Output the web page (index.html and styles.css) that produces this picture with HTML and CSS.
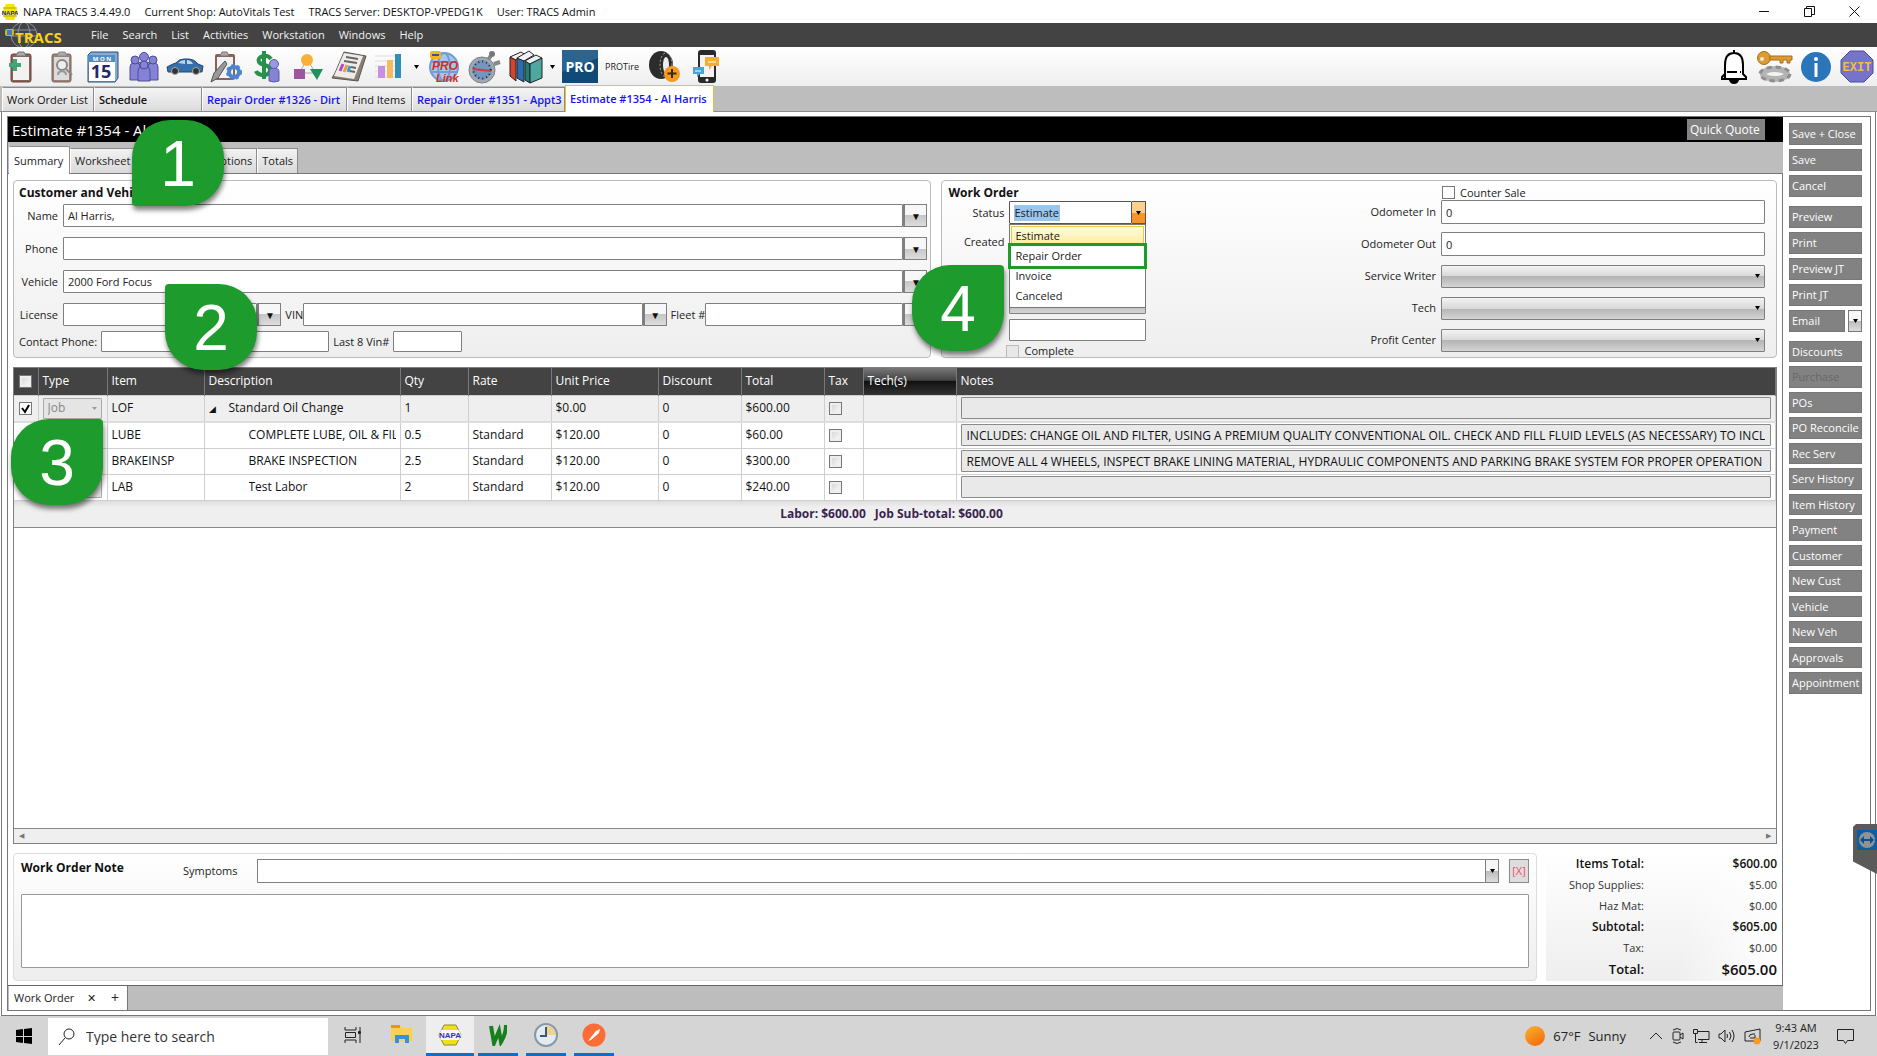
FILE: index.html
```html
<!DOCTYPE html>
<html lang="en">
<head>
<meta charset="utf-8">
<title>NAPA TRACS 3.4.49.0</title>
<link rel="stylesheet" href="styles.css">
</head>
<body>
<header class="titlebar">
  <svg class="app-logo" viewBox="0 0 16 16"><path d="M4 0h8l4 8-4 8H4L0 8z" fill="#f2e60a"/><path d="M1 4h14M1 12h14" stroke="#b9a800"/><text x="8" y="10.500" font-size="6" font-weight="700" fill="#22209c" text-anchor="middle" font-family="Liberation Sans, sans-serif">NAPA</text></svg>
  <span class="tb-version">NAPA TRACS 3.4.49.0</span>
  <span class="tb-shop">Current Shop: AutoVitals Test</span>
  <span class="tb-server">TRACS Server: DESKTOP-VPEDG1K</span>
  <span>User: TRACS Admin</span>
  <div class="window-buttons">
    <button aria-label="Minimize"><svg width="11" height="11" viewBox="0 0 11 11"><path d="M0 5.500h10" stroke="#111"/></svg></button>
    <button aria-label="Restore"><svg width="11" height="11" viewBox="0 0 11 11" fill="none" stroke="#111"><path d="M.5 2.500h7v8h-7zM2.500 2.500v-2h8v8h-3"/></svg></button>
    <button aria-label="Close"><svg width="11" height="11" viewBox="0 0 11 11"><path d="M.5.5l10 10M10.500.5l-10 10" stroke="#111"/></svg></button>
  </div>
</header>

<nav class="menubar">
  <svg class="tracs-logo" width="60" height="24" viewBox="0 0 60 24">
    <g fill="none" stroke="#8793a8"><circle cx="19" cy="12" r="13"/><ellipse cx="19" cy="12" rx="6" ry="13"/><path d="M7 7h24M6 13h26"/></g>
    <rect x="0" y="6" width="9" height="7" rx="2" fill="#f5a623"/><rect x="2" y="7" width="5" height="5" fill="#3b7fc4"/>
    <text x="10" y="20" font-size="15" font-weight="700" fill="#f8d21c" font-family="Open Sans, sans-serif">TRACS</text>
  </svg>
  <a href="#">File</a><a href="#">Search</a><a href="#">List</a><a href="#">Activities</a><a href="#">Workstation</a><a href="#">Windows</a><a href="#">Help</a>
</nav>

<div class="toolbar">
  <button aria-label="New work order"><svg width="24" height="32" viewBox="0 0 24 32"><rect x="2" y="3" width="20" height="28" rx="2" fill="#8b6156" stroke="#64463f"/><path d="M4 6h16v23H4z" fill="#f2f2f2"/><path d="M7 5l2-4h6l2 4z" fill="#aaa" stroke="#777"/><path d="M6 8v12M0 14h12" stroke="#3da877" stroke-width="4"/></svg></button>
  <button aria-label="Find work order"><svg width="24" height="32" viewBox="0 0 24 32"><rect x="2" y="3" width="19" height="28" rx="2" fill="#9b8177" stroke="#7a6760"/><path d="M4 6h15v23H4z" fill="#dcdcdc"/><path d="M7 5l2-4h6l2 4z" fill="#aaa" stroke="#888"/><circle cx="12" cy="14" r="5" fill="#eee" stroke="#888" stroke-width="2"/><path d="M16 18l6 6" stroke="#888" stroke-width="2"/><path d="M8 24c0-5 8-5 8 0" fill="none" stroke="#999" stroke-width="2"/></svg></button>
  <button aria-label="Calendar"><svg width="32" height="32" viewBox="0 0 32 32"><path d="M1 4l3-3h27v26l-3 4H1z" fill="#8aa9cc" stroke="#294f7c"/><path d="M1 4h27v7H1z" fill="#4c8fc9"/><path d="M2 11h26v19H2z" fill="#fff"/><text x="15" y="10" font-size="6" font-weight="700" fill="#fff" text-anchor="middle" font-family="Open Sans, sans-serif">M O N</text><text x="14" y="27" font-size="18" font-weight="700" fill="#232a66" text-anchor="middle" font-family="Open Sans, sans-serif">15</text></svg></button>
  <button aria-label="Customers"><svg width="30" height="30" viewBox="0 0 30 30" fill="#8583d6" stroke="#4e4c97"><path d="M9 16v-3q0-3 3-3h6q3 0 3 3v3z"/><circle cx="15" cy="5" r="4.500"/><path d="M1 28V15q0-4 4-4h3q3 0 3 4v13zM19 28V15q0-4 4-4h2q4 0 4 4v13z"/><circle cx="6" cy="8" r="4"/><circle cx="24" cy="8" r="4"/><path d="M9 29V19q0-4 4-4h4q4 0 4 4v10z"/><circle cx="15" cy="13" r="4"/></svg></button>
  <button aria-label="Vehicles"><svg width="38" height="18" viewBox="0 0 38 18"><path d="M1 9q5-3 9-4 3-4 8-4h5q5 0 9 5l5 2-1 6H2z" fill="#3570ad" stroke="#1e477a"/><path d="M12 5q3-3 7-3v4zM21 2q4 0 6 4h-6z" fill="#bdd4e8"/><circle cx="9" cy="13" r="3.500" fill="#333" stroke="#aaa"/><circle cx="30" cy="13" r="3.500" fill="#333" stroke="#aaa"/></svg></button>
  <button aria-label="Inspection settings"><svg width="32" height="32" viewBox="0 0 32 32"><rect x="5" y="3" width="20" height="26" rx="2" fill="#8b6156"/><path d="M7 6h16v21H7z" fill="#f2f2f2"/><path d="M10 5l2-4h5l2 4z" fill="#aaa" stroke="#777"/><path d="M1 31l3-9L15 10l2 3-9 14z" fill="#999" stroke="#555"/><circle cx="24" cy="21" r="5" fill="none" stroke="#4b84cf" stroke-width="4"/><circle cx="24" cy="21" r="7" fill="none" stroke="#4b84cf" stroke-width="2" stroke-dasharray="3 3"/></svg></button>
  <button aria-label="Payments"><svg width="26" height="32" viewBox="0 0 26 32"><path d="M17 8q-3-4-8-3-6 2-4 6 1 2 6 3 6 2 5 6-2 5-8 4-5-1-6-4M10 0v28" fill="none" stroke="#26914b" stroke-width="4"/><path d="M15 30V21q0-4 5-4t5 4v9q-5 2-10 0z" fill="#8583d6" stroke="#5c5aa5"/><circle cx="20" cy="13" r="4.500" fill="#9a98e4" stroke="#5c5aa5"/></svg></button>
  <button aria-label="Workflow"><svg width="30" height="28" viewBox="0 0 30 28"><path d="M14 7L6 20h17z" fill="none" stroke="#aaa"/><circle cx="14" cy="7" r="6" fill="#f7b137"/><path d="M1 16h11v10H1z" fill="#9d559f"/><path d="M17 16h13l-6 11z" fill="#20915a"/></svg></button>
  <button aria-label="News"><svg width="36" height="32" viewBox="0 0 36 32"><path d="M13 1l22 4-8 25L1 27l3-5z" fill="#8a7f75" stroke="#5c544d"/><path d="M13 2l19 3-9 23-20-3z" fill="#efece8"/><path d="M15 6l12 2M13 10l13 2M20 16l5 1M19 20l5 1" stroke="#666" stroke-width="2"/><path d="M9 20l3-7" stroke="#b048c0" stroke-width="3"/><path d="M13 21l3-7" stroke="#f19b38" stroke-width="3"/><path d="M17 21l2-6" stroke="#3a9ac8" stroke-width="3"/></svg></button>
  <button aria-label="Reports"><svg width="30" height="28" viewBox="0 0 30 28"><path d="M0 3h26M0 8h26M0 13h26M0 18h26M0 24h26" stroke="#ddd"/><path d="M3 13h7v12H3z" fill="#c98fe0"/><path d="M12 7h6v18h-6z" fill="#f5bb5c"/><path d="M20 1h6v24h-6z" fill="#2f8fb5"/></svg></button>
  <button class="tool-more" aria-label="More reports"><svg width="5" height="4" viewBox="0 0 5 4"><path d="M0 0h5L2.500 4z"/></svg></button>
  <button aria-label="PROLink"><svg width="32" height="34" viewBox="0 0 32 34"><circle cx="16" cy="17" r="14" fill="#a7c6ec"/><g fill="none" stroke="#6f9dd6" stroke-width="2"><circle cx="16" cy="17" r="14"/><ellipse cx="16" cy="17" rx="6" ry="14"/><path d="M3 12h26M3 22h26"/></g><rect x="2" y="1" width="11" height="8" rx="2" fill="#f4b223"/><path d="M4 4h7v2H4z" fill="#2c56a0"/><g fill="#c9341c" font-weight="700" font-style="italic" font-family="Liberation Sans, sans-serif"><text x="4" y="20" font-size="12">PRO</text><text x="8" y="32" font-size="11">Link</text></g></svg></button>
  <button aria-label="Labor timer"><svg width="34" height="34" viewBox="0 0 34 34"><path d="M20 10l4-6M26 14l6-2" stroke="#888" stroke-width="4"/><circle cx="24" cy="4" r="3" fill="#777"/><circle cx="14" cy="20" r="13" fill="#a2a8ae" stroke="#7a8086"/><circle cx="14" cy="20" r="10" fill="#7296be"/><circle cx="14" cy="20" r="8.500" fill="none" stroke="#223" stroke-width="2" stroke-dasharray="1 3"/><path d="M5 19l18 2" stroke="#d6393f" stroke-width="2"/></svg></button>
  <button aria-label="Catalogs"><svg width="34" height="34" viewBox="0 0 34 34" stroke="#222"><path d="M1 7l6 3v21l-6-5z" fill="#d2452c"/><path d="M1 7L12 2l5 3-10 5z" fill="#f6f0e8"/><path d="M8 8l7 3v21l-7-4z" fill="#2b6cb3"/><path d="M8 8L20 1l5 4-10 6z" fill="#eef2f6"/><path d="M16 11l5 3v19l-5-3z" fill="#1f7e78"/><path d="M16 11l11-6 6 3-12 6z" fill="#e8f2f0"/><path d="M21 14l12-6v20l-12 5z" fill="#4fa8a0"/></svg></button>
  <button class="tool-more" aria-label="More catalogs"><svg width="5" height="4" viewBox="0 0 5 4"><path d="M0 0h5L2.500 4z"/></svg></button>
  <button aria-label="PRO"><svg width="36" height="33" viewBox="0 0 36 33"><path d="M0 0h36v33H0z" fill="#114a76"/><path d="M0 0h36v8L0 22z" fill="#2b658f"/><text x="18" y="22" font-size="14" font-weight="700" fill="#fff" text-anchor="middle" font-family="Open Sans, sans-serif">PRO</text></svg></button>
  <button class="tool-text">PROTire</button>
  <button aria-label="Tires"><svg width="32" height="32" viewBox="0 0 32 32"><ellipse cx="12" cy="14" rx="12" ry="14" fill="#2c2c2c"/><ellipse cx="17" cy="14" rx="6" ry="12" fill="none" stroke="#aaa" stroke-dasharray="2 2"/><ellipse cx="17" cy="14" rx="3" ry="8" fill="#eee"/><circle cx="23" cy="23" r="8" fill="#f79a1e"/><path d="M23 18v9M18.500 22.500h9" stroke="#3b2a10" stroke-width="2"/></svg></button>
  <button aria-label="Text messages"><svg width="28" height="34" viewBox="0 0 28 34"><rect x="6" y="0" width="18" height="33" rx="3" fill="#2a2a2a"/><path d="M8 5h14v22H8z" fill="#f4f4f4"/><circle cx="15" cy="30" r="1.500" fill="#fff"/><path d="M13 7h14v9h-7l-3 4v-4h-4z" fill="#f7ae30"/><path d="M1 17h11v7H8l-3 3v-3H1z" fill="#45a5de"/><path d="M16 12h8M3 21h6" stroke="#fff"/></svg></button>
  <div class="tool-right">
    <button aria-label="Notifications"><svg width="28" height="36" viewBox="0 0 28 36"><path d="M5 29V16q0-12 9-12t9 12v9l3 3v2H2v-2l3-3zM14 1v3M7 23h10M20 23h1" fill="#fff" stroke="#000" stroke-width="2"/><path d="M9 31q1 4 5 4t5-4z" fill="#000"/></svg></button>
    <button aria-label="Security"><svg width="36" height="32" viewBox="0 0 36 32"><ellipse cx="18" cy="23" rx="12" ry="5" fill="none" stroke="#b4b4b4" stroke-width="6"/><ellipse cx="18" cy="23" rx="15" ry="7" fill="none" stroke="#8d8d8d" stroke-width="3" stroke-dasharray="5 4"/><circle cx="7" cy="7" r="6.500" fill="#dd9b33" stroke="#a86e18"/><circle cx="5" cy="8" r="2" fill="#f7e9cf"/><path d="M13 5h22v4h-2v3h-3V9h-4v3h-3V9H13z" fill="#dd9b33" stroke="#a86e18"/></svg></button>
    <button aria-label="Information"><svg width="30" height="30" viewBox="0 0 30 30"><circle cx="15" cy="15" r="15" fill="#2b75bb"/><circle cx="15" cy="7" r="2" fill="#fff"/><path d="M15 11v14" stroke="#fff" stroke-width="3"/></svg></button>
    <button aria-label="Exit"><svg width="34" height="33" viewBox="0 0 34 33"><path d="M10 1h14l9 9v13l-9 9H10l-9-9V10z" fill="#7674c8" stroke="#4c4aa0"/><text x="17" y="21" font-size="12" font-weight="700" fill="#f5b94c" text-anchor="middle" font-family="Liberation Mono, monospace">EXIT</text></svg></button>
  </div>
</div>

<nav class="doc-tabs">
  <button class="w-list">Work Order List</button>
  <button class="w-sched strong">Schedule</button>
  <button class="w-order blue">Repair Order #1326 - Dirt</button>
  <button class="w-find">Find Items</button>
  <button class="w-appt blue">Repair Order #1351 - Appt3</button>
  <button class="w-est blue current">Estimate #1354 - Al Harris</button>
</nav>

<main class="frame">
<div class="frame-inner">
  <div class="editor">
    <div class="doc-title"><h1>Estimate #1354 - Al Harris,</h1><button>Quick Quote</button></div>
    <nav class="page-tabs">
      <button class="w-summary current">Summary</button>
      <button>Worksheet</button>
      <button class="w-options">Options</button>
      <button>Totals</button>
    </nav>
    <div class="page">
      <div class="panels">
        <section class="panel customer">
          <h2>Customer and Vehicle</h2>
          <div class="crow"><label for="name">Name</label><input id="name" value="Al Harris,"><button class="drop" aria-label="Names">▼</button></div>
          <div class="crow"><label for="phone">Phone</label><input id="phone"><button class="drop" aria-label="Phones">▼</button></div>
          <div class="crow"><label for="vehicle">Vehicle</label><input id="vehicle" value="2000 Ford Focus"><button class="drop" aria-label="Vehicles">▼</button></div>
          <div class="crow">
            <label for="license">License</label><input id="license" class="w-license"><button class="drop" aria-label="Licenses">▼</button>
            <label for="vin" class="tight">VIN</label><input id="vin" class="w-vin"><button class="drop" aria-label="VINs">▼</button>
            <label for="fleet" class="tight">Fleet #</label><input id="fleet" class="w-fleet"><button class="drop" aria-label="Fleets">▼</button>
          </div>
          <div class="contact"><label for="cphone">Contact Phone:</label><input id="cphone" class="w-cphone"><label for="last8">Last 8 Vin#</label><input id="last8" class="w-last8"></div>
        </section>
        <section class="panel order">
          <h2>Work Order</h2>
          <div class="order-left">
            <label for="status">Status</label>
            <div class="status-box"><input id="status" value="Estimate"><button aria-label="Status list"><svg width="5" height="4" viewBox="0 0 5 4"><path d="M0 0h5L2.500 4z"/></svg></button>
              <ul class="status-list"><li class="hot">Estimate</li><li class="boxed">Repair Order</li><li>Invoice</li><li>Canceled</li></ul>
            </div>
            <label for="created">Created</label><input id="created">
            <select class="date" aria-label="Promised"><option>9/1/2023 10:00</option></select>
            <input class="po" aria-label="PO number">
            <div class="check complete"><input type="checkbox" id="complete" disabled><label for="complete">Complete</label></div>
          </div>
          <div class="order-right">
            <div class="check counter"><input type="checkbox" id="counter"><label for="counter">Counter Sale</label></div>
            <label for="odoin">Odometer In</label><input id="odoin" value="0">
            <label for="odoout">Odometer Out</label><input id="odoout" value="0">
            <label for="writer">Service Writer</label><select id="writer"><option></option></select>
            <label for="tech">Tech</label><select id="tech"><option></option></select>
            <label for="profit">Profit Center</label><select id="profit"><option></option></select>
          </div>
        </section>
      </div>

      <div class="grid">
        <table>
          <colgroup><col class="c-check"><col class="c-type"><col class="c-item"><col class="c-desc"><col class="c-qty"><col class="c-rate"><col class="c-unit"><col class="c-disc"><col class="c-total"><col class="c-tax"><col class="c-techs"><col></colgroup>
          <thead><tr><th><input type="checkbox" aria-label="All items"></th><th>Type</th><th>Item</th><th>Description</th><th>Qty</th><th>Rate</th><th>Unit Price</th><th>Discount</th><th>Total</th><th>Tax</th><th class="sorted">Tech(s)</th><th>Notes</th></tr></thead>
          <tbody>
            <tr class="job"><td><input type="checkbox" checked aria-label="Select LOF"></td><td class="type"><select disabled aria-label="Type"><option>Job</option></select></td><td>LOF</td><td><span class="twist">◢</span>Standard Oil Change</td><td>1</td><td></td><td>$0.00</td><td>0</td><td>$600.00</td><td><input type="checkbox" aria-label="Taxed"></td><td></td><td class="note"><input readonly aria-label="Notes"></td></tr>
            <tr><td></td><td class="type"><select disabled aria-label="Type"><option>Labor</option></select></td><td>LUBE</td><td class="sub"><div>COMPLETE LUBE, OIL &amp; FILTER</div></td><td>0.5</td><td>Standard</td><td>$120.00</td><td>0</td><td>$60.00</td><td><input type="checkbox" aria-label="Taxed"></td><td></td><td class="note"><input readonly aria-label="Notes" value="INCLUDES: CHANGE OIL AND FILTER, USING A PREMIUM QUALITY CONVENTIONAL OIL. CHECK AND FILL FLUID LEVELS (AS NECESSARY) TO INCLUDE"></td></tr>
            <tr><td></td><td class="type"><select disabled aria-label="Type"><option>Labor</option></select></td><td>BRAKEINSP</td><td class="sub"><div>BRAKE INSPECTION</div></td><td>2.5</td><td>Standard</td><td>$120.00</td><td>0</td><td>$300.00</td><td><input type="checkbox" aria-label="Taxed"></td><td></td><td class="note"><input readonly aria-label="Notes" value="REMOVE ALL 4 WHEELS, INSPECT BRAKE LINING MATERIAL, HYDRAULIC COMPONENTS AND PARKING BRAKE SYSTEM FOR PROPER OPERATION"></td></tr>
            <tr><td></td><td class="type"><select disabled aria-label="Type"><option>Labor</option></select></td><td>LAB</td><td class="sub"><div>Test Labor</div></td><td>2</td><td>Standard</td><td>$120.00</td><td>0</td><td>$240.00</td><td><input type="checkbox" aria-label="Taxed"></td><td></td><td class="note"><input readonly aria-label="Notes"></td></tr>
          </tbody>
        </table>
        <div class="grid-sum"><span>Labor: $600.00</span><span>Job Sub-total: $600.00</span></div>
        <div class="hscroll"><span>◀</span><span>▶</span></div>
      </div>

      <div class="bottom">
        <section class="panel notes">
          <div class="notes-top"><h2><label for="wonote">Work Order Note</label></h2><label for="symptoms">Symptoms</label><div class="symptom-box"><input id="symptoms"><button aria-label="Symptom list"><svg width="5" height="4" viewBox="0 0 5 4"><path d="M0 0h5L2.500 4z"/></svg></button></div><button class="clear">[X]</button></div>
          <textarea id="wonote"></textarea>
        </section>
        <dl class="totals">
          <dt class="b">Items Total:</dt><dd class="b">$600.00</dd>
          <dt>Shop Supplies:</dt><dd>$5.00</dd>
          <dt>Haz Mat:</dt><dd>$0.00</dd>
          <dt class="b">Subtotal:</dt><dd class="b">$605.00</dd>
          <dt>Tax:</dt><dd>$0.00</dd>
          <dt class="g">Total:</dt><dd class="gg">$605.00</dd>
        </dl>
      </div>
    </div>
    <nav class="foot-tabs"><div class="foot-tab"><span>Work Order</span><button aria-label="Close tab">✕</button><button class="add" aria-label="Add tab">+</button></div></nav>
  </div>

  <aside class="actions">
    <div class="agroup">
      <button>Save + Close</button><button>Save</button><button>Cancel</button>
    </div>
    <div class="agroup">
      <button>Preview</button><button>Print</button><button>Preview JT</button><button>Print JT</button>
      <div class="email"><button>Email</button><button class="email-more" aria-label="Email options"><svg width="5" height="4" viewBox="0 0 5 4"><path d="M0 0h5L2.500 4z"/></svg></button></div>
    </div>
    <div class="agroup dense">
      <button>Discounts</button><button disabled>Purchase</button><button>POs</button><button>PO Reconcile</button><button>Rec Serv</button><button>Serv History</button><button>Item History</button><button>Payment</button><button>Customer</button><button>New Cust</button><button>Vehicle</button><button>New Veh</button><button>Approvals</button><button>Appointment</button>
    </div>
  </aside>
</div>
</main>

<footer class="taskbar">
  <button class="start" aria-label="Start"><svg width="16" height="16" viewBox="0 0 16 16"><path d="M0 2l7-1v7H0zM8 1l8-1v8H8zM0 9h7v6l-7-1zM8 9h8v7l-8-1z"/></svg></button>
  <div class="search"><svg width="18" height="18" viewBox="0 0 18 18" fill="none" stroke="#222"><circle cx="11" cy="6" r="5"/><path d="M7 10l-6 7"/></svg><input aria-label="Search" placeholder="Type here to search"></div>
  <button class="task plain" aria-label="Task view"><svg width="18" height="16" viewBox="0 0 18 16" fill="none" stroke="#222"><path d="M1 0v3h11V0M1.500 5.500h10v5h-10zM1 16v-3h11v3M16 0v4M16 7v9"/><path d="M14.500 4.500h2v2h-2z" fill="#222"/></svg></button>
  <button class="task plain" aria-label="File Explorer"><svg width="22" height="19" viewBox="0 0 22 19"><path d="M0 0h9l2 3h10v13H0z" fill="#f9cf57"/><path d="M0 0h9v3H0z" fill="#dc9a22"/><path d="M4 18v-8h14v8h-4v-4H8v4z" fill="#3b8edb"/></svg></button>
  <button class="task active" aria-label="NAPA TRACS"><svg width="24" height="22" viewBox="0 0 24 22"><path d="M6 1h12l5 10-5 10H6L1 11z" fill="#eee11a" stroke="#8a8a2a"/><path d="M3 6h18l2 5-2 5H3l-2-5z" fill="#f5f5ff"/><text x="12" y="14" font-size="8" font-weight="700" fill="#3a2fa8" text-anchor="middle" font-family="Liberation Sans, sans-serif">NAPA</text></svg></button>
  <button class="task" aria-label="Webroot"><svg width="18" height="22" viewBox="0 0 18 22"><path d="M2 2l3 17 5-12 2 11Q17 10 17 1" fill="none" stroke="#17801c" stroke-width="4"/></svg></button>
  <button class="task" aria-label="Scheduler"><svg width="24" height="24" viewBox="0 0 24 24"><circle cx="12" cy="12" r="11" fill="#e3ebf1" stroke="#8499a8" stroke-width="2"/><path d="M12 12V2q9 1 10 10z" fill="#edd391"/><path d="M12 4v9H6" fill="none" stroke="#3c5870" stroke-width="2"/></svg></button>
  <button class="task" aria-label="Postman"><svg width="24" height="24" viewBox="0 0 24 24"><circle cx="12" cy="12" r="11.500" fill="#fb6c37"/><path d="M6 18l8-10 4-2-1 4-8 7z" fill="#fff"/></svg></button>
  <div class="tray">
    <span class="sun"></span><span class="temp">67°F</span><span class="sky">Sunny</span>
    <svg width="14" height="8" viewBox="0 0 14 8" fill="none" stroke="#222"><path d="M1 7l6-6 6 6"/></svg>
    <svg width="14" height="18" viewBox="0 0 14 18" fill="none" stroke="#222"><rect x="2" y="5" width="7" height="8" rx="1"/><path d="M9 8l3-2v6l-3-2M2 3q4-3 8 0M2 15q4 3 8 0"/></svg>
    <svg width="17" height="15" viewBox="0 0 17 15" fill="none" stroke="#222"><path d="M5 2.500h11v8H5M9 11v3M6 13.500h8M.5.5h4v4h-4zM2.500 5v8.500h2"/></svg>
    <svg width="18" height="14" viewBox="0 0 18 14" fill="none" stroke="#222"><path d="M1 5v4h2l4 4V1L3 5zM9 5q1 2 0 4M11.500 3q3 4 0 8M14 1q4 6 0 12"/></svg>
    <svg width="17" height="17" viewBox="0 0 17 17" fill="none" stroke="#222"><path d="M1 4l15-3v12H1zM5 9q0-3 4-3h2M11 7v3H6"/><circle cx="13" cy="13" r="3.500" fill="#ff9a1f" stroke="none"/></svg>
    <div class="clock"><span>9:43 AM</span><span>9/1/2023</span></div>
    <svg width="17" height="17" viewBox="0 0 17 17" fill="none" stroke="#222"><path d="M.5 1.500h16v11h-6l-2 3-2-3h-6z"/></svg>
  </div>
</footer>

<div class="remote-tab"><svg width="20" height="20" viewBox="0 0 20 20"><path d="M0 0h20v20H0z" fill="#0d5da3"/><circle cx="10" cy="10" r="8" fill="#8f9396"/><path d="M3 10l4-4v3h6V6l4 4-4 4v-3H7v3z" fill="#0d4f8e"/></svg></div>
<div class="step s1">1</div>
<div class="step s2">2</div>
<div class="step s3">3</div>
<div class="step s4">4</div>
</body>
</html>
```

FILE: styles.css
```css
* { box-sizing: border-box; }
body {
  margin: 0;
  min-height: 100vh;
  display: flex;
  flex-direction: column;
  position: relative;
  overflow-x: hidden;
  background: #fff;
  color: #222;
  font: 11px/16px "Open Sans", "Noto Sans", sans-serif;
}
button, input, select, textarea { font: inherit; color: inherit; margin: 0; }
button { padding: 0; border: 0; background: none; display: flex; align-items: center; }
input, select, textarea { border: 1px solid #7f7f7f; border-radius: 1px; background: #fff; padding: 0 4px; min-width: 0; }
h1, h2, ul, dl, dd { margin: 0; padding: 0; }
svg { display: block; flex: none; }

/* Window title */
.titlebar { height: 23px; display: flex; align-items: center; padding-left: 2px; color: #111; }
.app-logo { width: 16px; height: 16px; margin-right: 5px; }
.tb-version, .tb-shop, .tb-server { margin-right: 14px; }
.window-buttons { margin-left: auto; display: flex; }
.window-buttons button { width: 45px; height: 22px; justify-content: center; }

/* Menu */
.menubar { height: 24px; background: #434343; display: flex; align-items: center; padding-left: 5px; overflow: hidden; }
.tracs-logo { margin-right: 19px; }
.menubar a { color: #f2f2f2; text-decoration: none; padding: 0 7px; }

/* Toolbar */
.toolbar { height: 39px; display: flex; background: linear-gradient(#fff, #eee); }
.toolbar button { width: 41px; justify-content: center; }
.toolbar .tool-more { width: 13px; }
.toolbar .tool-text { width: 44px; font-size: 9px; }
.tool-right { margin-left: auto; display: flex; }

/* Document tabs */
.doc-tabs { height: 26px; background: #bdbdbd; display: flex; align-items: flex-end; padding-left: 2px; border-bottom: 1px solid #8c8c8c; }
.doc-tabs button { height: 24px; padding: 0 4px; border: 1px solid #8c8c8c; border-bottom: 0; border-left-color: #fff; background: linear-gradient(#f4f4f4, #dcdcdc); white-space: nowrap; color: #111; }
.doc-tabs .strong, .doc-tabs .blue { font-weight: 600; }
.doc-tabs .blue { color: #1414f0; }
.doc-tabs .current { height: 27px; margin-bottom: -1px; background: #fff; border: 1px solid #f3bd2e; border-bottom: 0; }
.w-list { width: 92px; } .w-sched { width: 108px; } .w-order { width: 145px; }
.w-find { width: 65px; } .w-appt { width: 153px; } .w-est { width: 149px; }

/* Frame */
.frame { flex: 1; display: flex; margin: 0 1px; padding: 4px 4px 4px 5px; border: 1px solid #777; border-top: 0; }
.frame-inner { flex: 1; min-width: 0; display: flex; border: 1px solid #777; }
.editor { flex: 1; min-width: 0; display: flex; flex-direction: column; }
.doc-title { height: 25px; background: #000; color: #fff; display: flex; align-items: center; justify-content: space-between; padding: 0 18px 0 4px; }
.doc-title h1 { font-size: 15px; font-weight: 400; }
.doc-title button { width: 78px; height: 21px; padding-left: 3px; background: #828282; font-size: 12px; }
.page-tabs { height: 32px; background: #bdbdbd; display: flex; align-items: flex-end; padding-left: 1px; border-bottom: 1px solid #777; }
.page-tabs button { height: 25px; padding: 0 4px; border: 1px solid #8c8c8c; border-left-color: #fff; border-bottom: 0; background: linear-gradient(#f2f2f2, #dadada); }
.page-tabs .current { height: 28px; margin-bottom: -1px; background: #fff; border-radius: 2px 2px 0 0; }
.page-tabs .w-summary { width: 61px; }
.page-tabs .w-options { width: 122px; justify-content: flex-end; }
.page { flex: 1; display: flex; flex-direction: column; padding: 6px 5px 4px; border-right: 1px solid #777; }

/* Panels */
.panels { display: grid; grid-template-columns: 919fr 836fr; gap: 10px; }
.panel { border: 1px solid #bbb; border-radius: 4px; background: linear-gradient(#fff, #eee); }
.panel h2 { font-size: 12px; line-height: 16px; font-weight: 700; color: #111; }
.customer { height: 178px; padding: 4px 3px 0 5px; }
.customer h2 { margin-bottom: 3px; }
.crow { display: flex; height: 23px; margin-bottom: 10px; align-items: center; }
.crow input { height: 23px; flex: 1; }
.crow label { width: 44px; padding-right: 5px; text-align: right; white-space: nowrap; }
.crow .tight { width: auto; padding: 0 0 0 4px; }
.crow .drop { width: 24px; height: 23px; }
.drop { justify-content: center; border: 1px solid #7f7f7f; border-left-width: 2px; background: linear-gradient(#f7f7f7 50%, #c6c6c6 50%, #ddd); font-size: 10px; color: #111; }
.crow .w-license { flex: 192; } .crow .w-vin { flex: 343; } .crow .w-fleet { flex: 196; }
.contact { display: flex; align-items: center; height: 21px; margin-top: -5px; gap: 4px; }
.contact input { height: 21px; }
.w-cphone { width: 228px; } .w-last8 { width: 69px; }

.order { height: 178px; padding: 4px 11px 0 6px; display: grid; grid-template-columns: 198px 1fr 428px; grid-template-rows: 16px 1fr; }
.order h2 { grid-column: 1; grid-row: 1; }
.order label { text-align: right; padding-right: 5px; }
.order-left { grid-column: 1; grid-row: 2; display: grid; grid-template-columns: 61px 137px; align-content: start; row-gap: 5px; align-items: center; }
.order-left input, .order-left select { height: 23px; }
.order-left #created { height: 24px; margin: 3px 0 30px; }
.order-left label[for="created"] { align-self: start; margin-top: 5px; }
.order-left .date, .order-left .po { grid-column: 2; }
.order-left .po { height: 22px; }
.status-box { position: relative; display: flex; width: 137px; }
.status-box input { flex: 1; width: 120px; border-color: #555; background: linear-gradient(#99c6ee, #99c6ee) 4px 3px / 46px 16px no-repeat #fff; }
.status-box button { width: 14px; justify-content: center; border: 1px solid #555; border-left: 0; background: linear-gradient(#fcd08b 50%, #fb9325 50%); }
.status-list { position: absolute; left: 0; top: 23px; width: 137px; padding: 1px; border: 1px solid #777; background: #fff; list-style: none; z-index: 2; }
.status-list li { height: 20px; line-height: 20px; padding-left: 4px; }
.status-list .hot { border: 1px solid #e8c84a; background: linear-gradient(#fffbe0, #fdec9c); line-height: 18px; padding-left: 3px; }
.status-list .boxed { outline: 3px solid #1e9b2d; }
.check { display: flex; align-items: center; }
.check label { padding: 0 0 0 5px; }
.complete { grid-column: 2; margin: -3px 0 0 -3px; }
.check input, table input[type="checkbox"] { appearance: none; width: 13px; height: 13px; padding: 0; border: 1px solid #777; border-radius: 0; background: #fff; flex: none; }
.order-left .check input { height: 13px; border-color: #bbb; background: #e8e8e8; }
.order-right { grid-column: 3; grid-row: 1 / 3; display: grid; grid-template-columns: 104px 324px; grid-template-rows: 7px; grid-auto-rows: 24px; row-gap: 8px; align-items: center; align-content: start; }
.order-right .check { grid-column: 2; padding-left: 1px; height: 15px; align-self: start; }
.order-right > input { height: 24px; }
.order-right select { height: 23px; }
select { appearance: none; background: url("data:image/svg+xml,%3Csvg xmlns='http://www.w3.org/2000/svg' width='5' height='4'%3E%3Cpath d='M0 0h5L2.500 4z'/%3E%3C/svg%3E") right 4px center no-repeat, linear-gradient(#f3f3f3, #d8d8d8 50%, #b4b4b4 50%, #d4d4d4); }

/* Items grid */
.grid { flex: 1; display: flex; flex-direction: column; margin-top: 9px; border: 1px solid #808080; }
table { width: 100%; table-layout: fixed; border-collapse: collapse; font-size: 12px; color: #111; }
.c-check { width: 24px; } .c-type { width: 69px; } .c-item { width: 97px; } .c-desc { width: 196px; }
.c-qty { width: 68px; } .c-rate { width: 83px; } .c-unit { width: 107px; } .c-disc { width: 83px; }
.c-total { width: 83px; } .c-tax { width: 39px; } .c-techs { width: 93px; }
th { height: 27px; padding: 0 4px; background: #434343; border-right: 1px solid #777; color: #fff; font-weight: 400; text-align: left; }
th.sorted { background: linear-gradient(#777, #444 45%, #111 50%, #333); }
td { height: 26px; padding: 0 4px; border: 1px solid #cfcfcf; border-left: 0; overflow: hidden; white-space: nowrap; }
.job td { height: 27px; background: #efefef; border-bottom: 2px solid #ddd; }
th:first-child, td:first-child { padding: 0 0 0 5px; }
table input[type="checkbox"] { display: block; background: linear-gradient(135deg, #d0d0d0, #fff); box-shadow: inset 0 0 0 2px #eee; }
table input[type="checkbox"]:checked { background: url("data:image/svg+xml,%3Csvg xmlns='http://www.w3.org/2000/svg' width='11' height='11'%3E%3Cpath d='M2 5l3 4 4-7' fill='none' stroke='%23000' stroke-width='2'/%3E%3C/svg%3E") no-repeat #fff; box-shadow: none; }
.type select { width: 59px; height: 21px; display: block; color: #888; opacity: 1; border-color: #aaa; background: url("data:image/svg+xml,%3Csvg xmlns='http://www.w3.org/2000/svg' width='5' height='3'%3E%3Cpath d='M0 0h5L2.500 3z' fill='%23999'/%3E%3C/svg%3E") right 4px center no-repeat #e5e5e5; }
.sub div { margin-left: 40px; overflow: hidden; }
.twist { display: inline-block; width: 20px; font-size: 9px; }
.note input { display: block; width: 100%; height: 22px; background: #e9e9e9; border-color: #8a8a8a; padding: 0 5px; }
.grid-sum { height: 27px; display: flex; justify-content: center; gap: 9px; align-items: center; padding-right: 7px; background: linear-gradient(#ddd, #efefef 6px); border-bottom: 1px solid #888; color: #3a2450; font-size: 12px; font-weight: 700; }
.hscroll { margin-top: auto; height: 15px; display: flex; justify-content: space-between; align-items: center; padding: 0 5px; border-top: 1px solid #888; background: #efefef; font-size: 7px; color: #777; }

/* Notes and totals */
.bottom { display: flex; gap: 9px; margin-top: 9px; }
.notes { flex: 1; min-width: 0; height: 128px; padding: 5px 7px 12px; display: flex; flex-direction: column; border-color: #ddd; }
.notes-top { display: flex; align-items: center; height: 24px; margin-bottom: 11px; }
.notes-top h2 { width: 162px; margin-bottom: 6px; }
.notes-top > label { width: 74px; }
.symptom-box { flex: 1; display: flex; height: 24px; }
.symptom-box input { flex: 1; border-right: 0; }
.symptom-box button { width: 14px; justify-content: center; border: 1px solid #7f7f7f; background: linear-gradient(#f7f7f7 50%, #bbb 50%, #ddd); }
.clear { width: 20px; height: 24px; margin-left: 10px; justify-content: center; border: 1px solid #8a8a8a; background: #ddd; color: #f0506a; }
.notes textarea { flex: 1; resize: none; border-color: #999; }
.totals { width: 231px; height: 128px; display: grid; grid-template-columns: 98px 1fr; grid-auto-rows: 21px; align-items: center; text-align: right; background: linear-gradient(100deg, transparent 60%, #fff), linear-gradient(#fff, #eee); color: #333; }
.totals .b { font-size: 12px; font-weight: 600; color: #111; }
.totals .g { font-size: 13px; font-weight: 600; color: #111; }
.totals .gg { font-size: 15px; font-weight: 600; color: #111; }
.foot-tabs { height: 25px; background: #bdbdbd; border-top: 1px solid #666; padding-left: 1px; }
.foot-tab { width: 119px; height: 24px; padding: 0 0 0 5px; display: flex; align-items: center; background: #fff; border-right: 1px solid #777; }
.foot-tab span { flex: 1; white-space: nowrap; }
.foot-tab button { width: 24px; justify-content: center; }
.foot-tab .add { font-size: 14px; }

/* Action buttons */
.actions { width: 87px; padding: 6px 8px 0 6px; }
.agroup { display: grid; gap: 4px; margin-bottom: 9px; }
.agroup button { height: 22px; padding-left: 2px; background: #828282; border: 1px solid #777; color: #fff; white-space: nowrap; }
.agroup button:disabled { color: #686868; }
.agroup.dense button:nth-child(odd) { height: 21px; }
.email { display: flex; gap: 3px; }
.email button:first-child { flex: 1; }
.email .email-more { width: 14px; padding: 0; justify-content: center; background: linear-gradient(#f7f7f7 50%, #bbb 50%, #ddd); }

/* Taskbar */
.taskbar { height: 40px; background: #d5d5d5; display: flex; align-items: stretch; }
.start { width: 48px; justify-content: center; }
.search { width: 280px; margin: 2px 0 1px; background: #fff; display: flex; align-items: center; padding-left: 10px; gap: 10px; }
.search input { border: 0; padding: 0; flex: 1; font-size: 14px; }
.search input::placeholder { color: #333; }
.task { width: 40px; margin: 0 4px; justify-content: center; border-bottom: 3px solid #0a6fce; }
.task.plain { border-color: transparent; margin: 0; width: 49px; }
.task.active { background: #eee; width: 48px; margin: 0; }
.tray { margin-left: auto; padding-right: 23px; display: flex; align-items: center; gap: 8px; font-size: 13px; color: #222; }
.sun { width: 20px; height: 20px; border-radius: 50%; background: linear-gradient(150deg, #fdb22b, #f0640c); }
.sky { margin-right: 15px; }
.clock { font-size: 11px; line-height: 17px; text-align: center; width: 48px; margin: 0 9px 0 3px; }
.clock span { display: block; }

/* Overlays */
.remote-tab { position: absolute; right: 0; top: 824px; width: 24px; height: 50px; padding: 6px 0 0 4px; background: #5a5a5a; clip-path: polygon(0 3px, 3px 0, 100% 0, 100% 100%, 0 75%); overflow: hidden; }
.step { position: absolute; width: 92px; height: 86px; border-radius: 38px; background: #1e9b2d; color: #fff; font: 64px/88px "Liberation Sans", Arial, sans-serif; text-align: center; box-shadow: 1px 4px 5px rgba(0, 0, 0, .5); z-index: 5; }
.s1 { left: 132px; top: 120px; border-bottom-left-radius: 4px; }
.s2 { left: 165px; top: 284px; border-top-left-radius: 4px; }
.s3 { left: 11px; top: 419px; border-top-right-radius: 4px; }
.s4 { left: 912px; top: 265px; border-top-right-radius: 4px; }
```
